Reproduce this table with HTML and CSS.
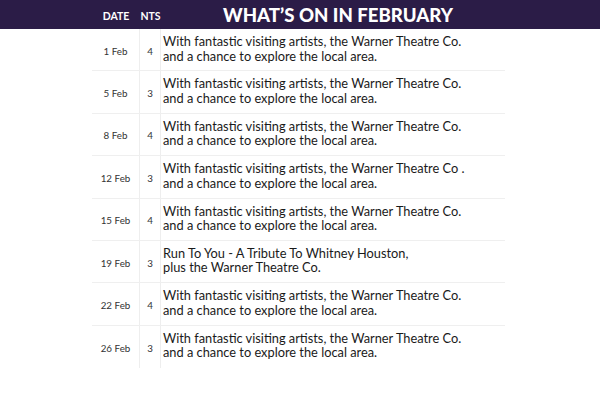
FILE: index.html
```html
<!DOCTYPE html>
<html>
<head>
<meta charset="utf-8">
<link rel="stylesheet" href="styles.css">
</head>
<body>
<div class="header">
  <div class="h-date">DATE</div>
  <div class="h-nts">NTS</div>
  <div class="h-title">WHAT’S ON IN FEBRUARY</div>
</div>
<div class="table">
  <div class="row"><div class="date">1 Feb</div><div class="nts">4</div><div class="desc">With fantastic visiting artists, the Warner Theatre Co.<br>and a chance to explore the local area.</div></div>
  <div class="row"><div class="date">5 Feb</div><div class="nts">3</div><div class="desc">With fantastic visiting artists, the Warner Theatre Co.<br>and a chance to explore the local area.</div></div>
  <div class="row"><div class="date">8 Feb</div><div class="nts">4</div><div class="desc">With fantastic visiting artists, the Warner Theatre Co.<br>and a chance to explore the local area.</div></div>
  <div class="row"><div class="date">12 Feb</div><div class="nts">3</div><div class="desc">With fantastic visiting artists, the Warner Theatre Co .<br>and a chance to explore the local area.</div></div>
  <div class="row"><div class="date">15 Feb</div><div class="nts">4</div><div class="desc">With fantastic visiting artists, the Warner Theatre Co.<br>and a chance to explore the local area.</div></div>
  <div class="row"><div class="date">19 Feb</div><div class="nts">3</div><div class="desc">Run To You - A Tribute To Whitney Houston,<br>plus the Warner Theatre Co.</div></div>
  <div class="row"><div class="date">22 Feb</div><div class="nts">4</div><div class="desc">With fantastic visiting artists, the Warner Theatre Co.<br>and a chance to explore the local area.</div></div>
  <div class="row last"><div class="date">26 Feb</div><div class="nts">3</div><div class="desc">With fantastic visiting artists, the Warner Theatre Co.<br>and a chance to explore the local area.</div></div>
</div>
</body>
</html>
```
FILE: styles.css
```css
html, body {
  margin: 0;
  padding: 0;
  background: #ffffff;
  font-family: Lato, "Open Sans", sans-serif;
  color: #1e1e1e;
}
.header {
  height: 29px;
  background: #2b1c47;
  color: #ffffff;
  display: grid;
  grid-template-columns: 92px 48px 21px 344px;
  align-items: center;
}
.h-date {
  grid-column: 2;
  text-align: center;
  font-size: 10.5px;
  font-weight: 700;
  padding-top: 3px;
}
.h-nts {
  grid-column: 3;
  text-align: center;
  font-size: 10.5px;
  font-weight: 700;
  padding-top: 3px;
}
.h-title {
  grid-column: 4;
  text-align: center;
  padding-left: 10px;
  font-size: 18.6px;
  font-weight: 900;
}
.table {
  margin-left: 92px;
  width: 413px;
}
.row {
  display: grid;
  grid-template-columns: 48px 21px 344px;
  height: 42.4px;
  border-bottom: 1px solid #efefef;
  box-sizing: border-box;
}
.row.last {
  border-bottom: none;
}
.date, .nts {
  display: flex;
  align-items: center;
  justify-content: center;
  font-size: 9.8px;
  color: #333333;
  padding-top: 2px;
}
.date {
  border-right: 1px solid #eeeeee;
}
.nts {
  border-right: 1px solid #eeeeee;
}
.desc {
  font-size: 12.8px;
  line-height: 14.5px;
  padding: 5px 0 0 2px;
  color: #1a1a1a;
}
```
